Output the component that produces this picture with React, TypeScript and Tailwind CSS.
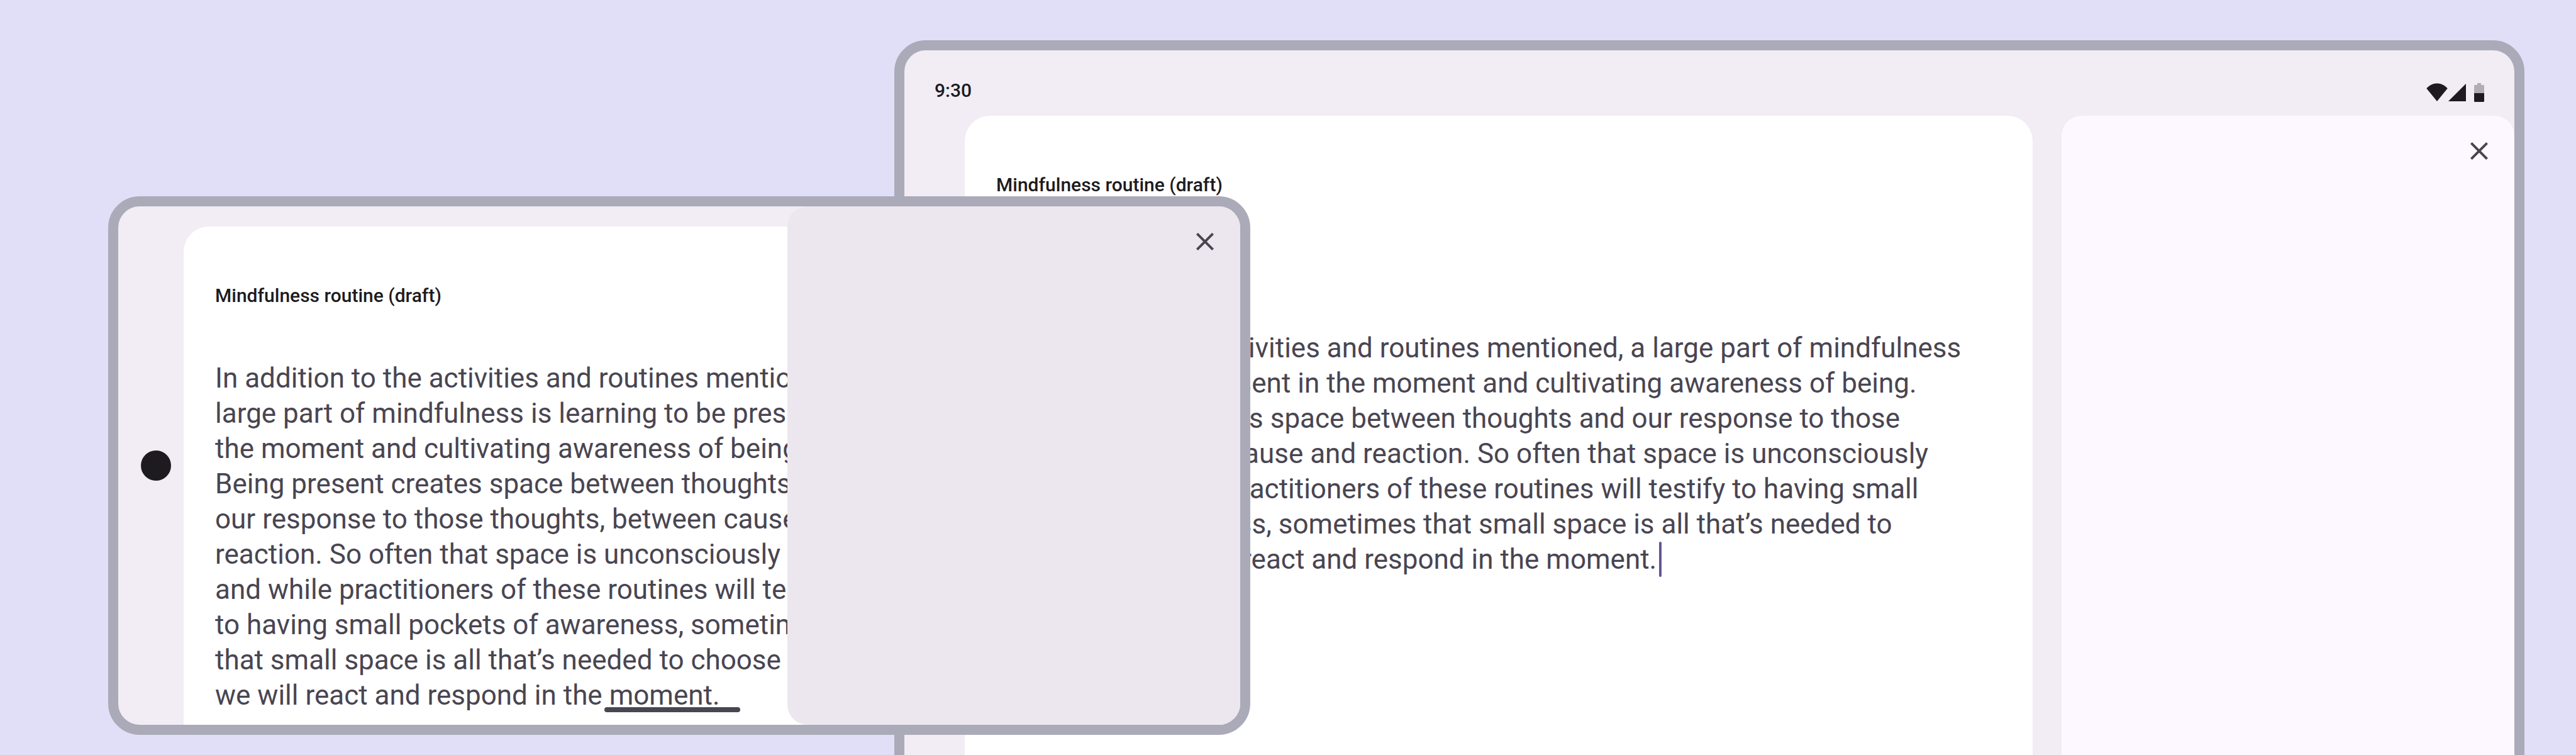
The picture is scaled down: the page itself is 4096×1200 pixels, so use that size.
import type { ReactNode } from 'react';

const tabletLines = [
  'In addition to the activities and routines mentioned, a large part of mindfulness',
  'is learning to be present in the moment and cultivating awareness of being.',
  'Being present creates space between thoughts and our response to those',
  'thoughts, between cause and reaction. So often that space is unconsciously',
  'ignored, and while practitioners of these routines will testify to having small',
  'pockets of awareness, sometimes that small space is all that’s needed to',
];

const phoneLines = [
  'In addition to the activities and routines mentioned, a',
  'large part of mindfulness is learning to be present in',
  'the moment and cultivating awareness of being.',
  'Being present creates space between thoughts and',
  'our response to those thoughts, between cause and',
  'reaction. So often that space is unconsciously ignored,',
  'and while practitioners of these routines will testify',
  'to having small pockets of awareness, sometimes',
  'that small space is all that’s needed to choose how',
];

function CloseButton() {
  return (
    <button type="button" aria-label="Close" className="block text-[#494551]">
      <svg className="size-12" viewBox="0 0 24 24" fill="currentColor">
        <path d="M6.4 19 5 17.6 10.6 12 5 6.4 6.4 5 12 10.6 17.6 5 19 6.4 13.4 12 19 17.6 17.6 19 12 13.4Z" />
      </svg>
    </button>
  );
}

function StatusIcons() {
  return (
    <svg className="w-[92px] h-9 text-[#1d1b20]" viewBox="0 0 92 36" fill="currentColor">
      <path d="M17 35 0.3 14.5C4.7 9.500 10.500 6.500 17 6.500S29.300 9.500 33.700 14.500Z" />
      <path d="M35 35 63 7V35Z" />
      <path opacity="0.3" d="M81 6h6v3h3.500a1.500 1.500 0 0 1 1.500 1.500V22H76V10.500A1.500 1.500 0 0 1 77.500 9H81Z" />
      <path d="M76 22h16v12.500a1.500 1.500 0 0 1-1.500 1.500h-13a1.500 1.500 0 0 1-1.500-1.500Z" />
    </svg>
  );
}

interface DraftProps {
  lines: string[];
  bodyClass: string;
  children: ReactNode;
}

function Draft({ lines, bodyClass, children }: DraftProps) {
  return (
    <article className="px-[50px] pt-[90px] whitespace-nowrap">
      <h2 className="text-[30px] leading-10 font-medium text-[#1d1b20]">Mindfulness routine (draft)</h2>
      <p className={`text-[44px] leading-14 text-[#494551] ${bodyClass}`}>
        {lines.map((line) => (
          <span key={line} className="block">
            {line}
          </span>
        ))}
        <span className="block">{children}</span>
      </p>
    </article>
  );
}

function Tablet() {
  return (
    <section className="flex flex-col h-[1400px] border-16 border-[#abaab8] rounded-[50px] bg-[#f2ecf4] overflow-hidden">
      <header className="flex items-center justify-between h-26 px-12 pt-6">
        <span className="text-[30px] leading-10 font-medium text-[#1d1b20]">9:30</span>
        <StatusIcons />
      </header>
      <div className="flex flex-1 gap-[46px] pl-24">
        <div className="flex-1 min-w-0 bg-white rounded-t-[40px]">
          <Draft lines={tabletLines} bodyClass="mt-[211px]">
            choose how we will react and respond in the moment.
            <span className="inline-block align-top w-1 h-14 ml-1 rounded-full bg-[#65558f]" />
          </Draft>
        </div>
        <aside className="flex justify-end items-start w-[720px] p-8 bg-[#fdf7ff] rounded-t-[32px]">
          <CloseButton />
        </aside>
      </div>
    </section>
  );
}

function Phone() {
  return (
    <section className="absolute left-[172px] top-[312px] w-[1816px] flex border-16 border-[#abaab8] rounded-[50px] bg-[#f2ecf4] overflow-hidden">
      <div className="flex items-center w-26 pl-9">
        <div className="size-12 rounded-full bg-[#1d1b20]" />
      </div>
      <div className="flex-1 min-w-0 mt-8 pb-[19px] bg-white rounded-tl-[40px]">
        <Draft lines={phoneLines} bodyClass="mt-[83px]">
          we will react and respond in the{' '}
          <span className="relative inline-block">
            moment.
            <span className="absolute -left-2 top-[47px] w-[216px] h-2 rounded-full bg-[#494551]" />
          </span>
        </Draft>
      </div>
      <aside className="absolute inset-y-0 right-0 flex justify-end items-start w-[720px] p-8 bg-[#ece6ee] rounded-l-[32px]">
        <CloseButton />
      </aside>
    </section>
  );
}

export default function App() {
  return (
    <main className="relative h-screen overflow-hidden pt-16 pl-[1422px] pr-[82px] bg-[#e1dff7] font-['Roboto',sans-serif]">
      <Tablet />
      <Phone />
    </main>
  );
}
